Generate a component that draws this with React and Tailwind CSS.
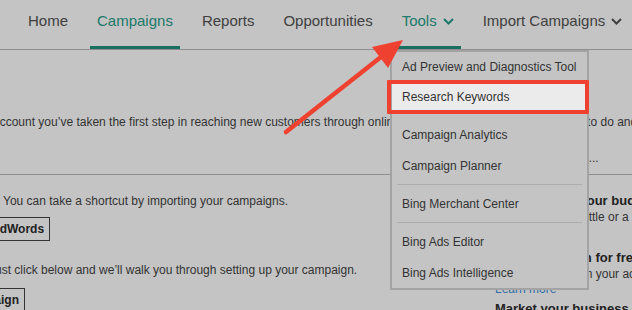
const navItems = [
  { label: "Home" },
  { label: "Campaigns", active: true },
  { label: "Reports" },
  { label: "Opportunities" },
  { label: "Tools", menu: true, open: true },
  { label: "Import Campaigns", menu: true },
];

const toolGroups = [
  ["Ad Preview and Diagnostics Tool", "Research Keywords"],
  ["Campaign Analytics", "Campaign Planner"],
  ["Bing Merchant Center"],
  ["Bing Ads Editor", "Bing Ads Intelligence"],
];

export default function App() {
  return (
    <div className="relative h-[310px] w-[632px] overflow-hidden bg-[#c4c4c4] font-['Liberation_Sans',Arial,sans-serif] text-[#333]">
      <nav className="flex h-[50px] gap-[15px] border-b border-[#8e8e8e] pl-[21px]">
        {navItems.map((item) => (
          <NavItem key={item.label} item={item} />
        ))}
      </nav>

      <section className="h-[125px] border-b border-[#8e8e8e] whitespace-nowrap text-[12px] leading-4">
        <p className="-ml-[7px] pt-[64px]">
          account you’ve taken the first step in reaching new customers through online advertising. Here’s what you need to do and how to get started.
        </p>
        <p className="mt-[20px] ml-[522px]">See them all...</p>
      </section>

      <div className="flex whitespace-nowrap">
        <div className="flex-1 pt-[18px] text-[12px] leading-4">
          <p className="pl-[3px]">You can take a shortcut by importing your campaigns.</p>
          <button className="mt-[8px] -ml-[15px] h-[24px] border border-[#333] px-[5px] text-[12px] font-bold text-[#222]">
            AdWords
          </button>
          <p className="mt-[21px] -ml-[11px]">Just click below and we’ll walk you through setting up your campaign.</p>
          <button className="mt-[10px] -ml-[45px] h-[24px] border border-[#333] px-[5px] text-[12px] font-bold text-[#222]">
            Campaign
          </button>
        </div>

        <div className="w-[137px] pt-[17px]">
          <h3 className="text-[13px] font-bold leading-[17px] text-[#222]">Spend within your budget</h3>
          <p className="text-[12px] leading-4">You could pay a little or a lot each day.</p>
          <h3 className="mt-[24px] text-[13px] font-bold leading-[17px] text-[#222]">Claim a coupon for free clicks</h3>
          <p className="text-[12px] leading-4">Enter your code in your account.</p>
          <a className="-mt-px block text-[12px] leading-4 text-[#2d6ca8]">Learn more</a>
          <h3 className="mt-[3px] text-[13px] font-bold leading-[17px] text-[#222]">Market your business</h3>
        </div>
      </div>

      <ToolsMenu />

      <div className="absolute left-[387px] top-[80px] h-[34px] w-[202px] rounded-[1px] border-4 border-[#ef4130]" />

      <svg className="pointer-events-none absolute left-0 top-0" width="632" height="310" viewBox="0 0 632 310">
        <line x1="286" y1="132" x2="386" y2="53" stroke="#ef4130" strokeWidth="4.5" strokeLinecap="round" />
        <polygon points="403,40 372,47 388,68" fill="#ef4130" />
      </svg>
    </div>
  );
}

function NavItem({ item }) {
  const color = item.active || item.open ? "text-[#1b7a69]" : "text-[#404040]";
  return (
    <div
      className={`flex h-[49px] items-start border-b-[3px] px-[7px] pt-[11px] text-[15px] leading-5 ${color} ${
        item.active || item.open ? "border-[#17705f]" : "border-transparent"
      }`}
    >
      <span>{item.label}</span>
      {item.menu && (
        <svg className="ml-[6px] mt-[7px]" width="11" height="7" viewBox="0 0 11 7" fill="none">
          <path d="M1 1 L5.5 5.5 L10 1" stroke="currentColor" strokeWidth="2" />
        </svg>
      )}
    </div>
  );
}

function ToolsMenu() {
  return (
    <div className="absolute left-[390px] top-[50px] h-[240px] w-[199px] border-2 border-[#a3a3a3] bg-[#c4c4c4] text-[12px] text-[#333]">
      {toolGroups.map((group, gi) => (
        <div key={gi}>
          {gi > 0 && <div className={`mx-[5px] my-[3px] h-px ${gi === 1 ? "bg-transparent" : "bg-[#adadad]"}`} />}
          {group.map((label, i) => {
            const first = gi === 0 && i === 0;
            const selected = label === "Research Keywords";
            return (
              <div
                key={label}
                className={`flex items-center pl-[10px] ${first ? "h-[29px]" : "h-[31px]"} ${selected ? "bg-[#ebebeb]" : ""}`}
              >
                {label}
              </div>
            );
          })}
        </div>
      ))}
    </div>
  );
}
